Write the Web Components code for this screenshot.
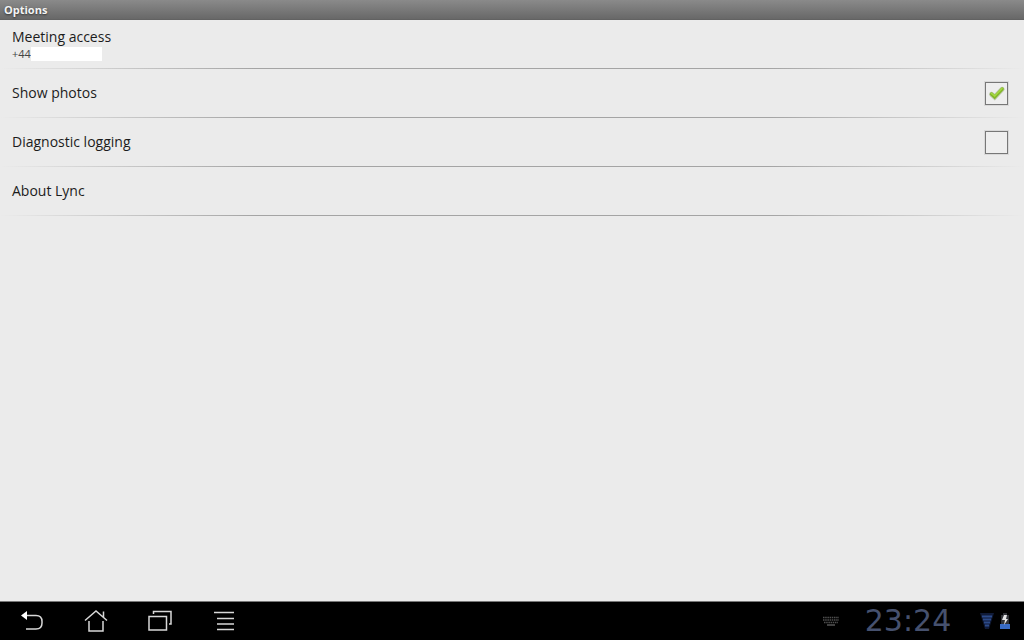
<!DOCTYPE html>
<html lang="en">
<head>
<meta charset="utf-8">
<title>Options</title>
<style>
html, body { height: 100%; margin: 0; }
body { font-family: "Open Sans", "Noto Sans", sans-serif; color: #1c1c1c; background: #ebebeb; }
</style>
</head>
<body>
<options-screen></options-screen>
<script>
function define(name, html, setup) {
  const template = document.createElement('template');
  template.innerHTML = html;
  customElements.define(name, class extends HTMLElement {
    constructor() {
      super();
      this.attachShadow({ mode: 'open' }).append(template.content.cloneNode(true));
    }
    connectedCallback() { if (setup) setup(this, this.shadowRoot); }
  });
}

define('title-bar', `
<style>
:host { display: flex; align-items: center; height: 20px; padding: 0 4px; box-sizing: border-box;
  background: linear-gradient(#8a8a8a, #686868); border-bottom: 1px solid #626262; }
h1 { margin: 0; font-size: 11px; line-height: 18px; font-weight: 700; color: #f4f4f4; text-shadow: 0 1px 2px #333; }
</style>
<h1><slot></slot></h1>`);

define('option-row', `
<style>
:host { display: flex; flex-direction: column; height: 49px; }
.body { flex: 1; display: flex; flex-direction: column; justify-content: center; padding: 0 12px; }
.title { font-size: 14px; line-height: 20px; }
.rule { height: 1px; background: linear-gradient(90deg, transparent, #a4a4a4 25%, #a4a4a4 75%, transparent); }
::slotted([slot=detail]) { font-size: 11px; line-height: 14px; color: #444; padding-bottom: 1px; }
</style>
<div class="body"><div class="title"><slot></slot></div><slot name="detail"></slot></div>
<div class="rule"></div>`);

define('check-row', `
<style>
:host { display: flex; flex-direction: column; height: 49px; }
label { flex: 1; display: flex; align-items: center; justify-content: space-between; padding: 0 16px 0 12px; font-size: 14px; line-height: 20px; }
.box { display: grid; width: 23px; height: 23px; }
input, svg { grid-area: 1 / 1; margin: 0; width: 23px; height: 23px; }
input { appearance: none; box-sizing: border-box; border: 1px solid #777; outline: 1px solid #d9d9d9; background: #eee; }
svg { pointer-events: none; visibility: hidden; z-index: 1; }
input:checked + svg { visibility: visible; }
.rule { height: 1px; background: linear-gradient(90deg, transparent, #a4a4a4 25%, #a4a4a4 75%, transparent); }
</style>
<label for="check"><span><slot></slot></span>
<span class="box"><input type="checkbox" id="check"><svg viewBox="0 0 23 23" fill="none" stroke-linecap="round" stroke-linejoin="miter">
<path d="M6.500 12.200 9.700 15.200 17.200 7.200" stroke="#b9c5a3" stroke-width="4.800"/>
<path d="M6.500 12 9.700 15 17.200 7" stroke="#83b827" stroke-width="3.200"/>
<path d="M6.500 11.400 9.700 14 17 6.400" stroke="#a5d843" stroke-width="1.500"/>
</svg></span></label>
<div class="rule"></div>`, (host, root) => {
  root.querySelector('input').checked = host.hasAttribute('checked');
});

define('masked-number', `
<style>
:host { display: flex; align-items: center; }
.mask { width: 71px; height: 14px; background: #fff; }
</style>
<slot></slot><span class="mask"></span>`);

define('nav-button', `
<style>
:host { display: block; width: 64px; height: 38px; }
button { display: grid; place-items: center; width: 100%; height: 100%; padding: 0; border: 0; background: none; color: #d8d8d8; }
</style>
<button type="button"><slot></slot></button>`, (host, root) => {
  root.querySelector('button').setAttribute('aria-label', host.getAttribute('label'));
});

define('system-clock', `
<style>
:host { display: block; width: 108px; text-align: center; font: 400 30px/36px "DejaVu Sans", sans-serif; color: #46516e; }
</style>
<time><slot></slot></time>`);

define('system-bar', `
<style>
:host { display: flex; justify-content: space-between; align-items: center; height: 39px; box-sizing: border-box; border-top: 1px solid #777; background: #000; }
nav, .status { display: flex; align-items: center; }
.status { padding-right: 13px; }
nav svg { display: block; width: 26px; height: 26px; fill: none; stroke: currentColor; stroke-width: 1.5; }
system-clock { margin: 0 18px 0 15px; }
.signal { margin-right: 5px; }
</style>
<nav>
<nav-button label="Back"><svg viewBox="0 0 26 26"><path d="M7 7.500h10q6 0 6 6v1.500q0 6-6 6H7"/><path d="M2 7.500 8 3v9z" fill="#fff" stroke="none"/></svg></nav-button>
<nav-button label="Home"><svg viewBox="0 0 26 26"><path d="M2 12.500 13 3 24 12.500M20.500 9V3.500M6 13v10h14V13"/></svg></nav-button>
<nav-button label="Recent apps"><svg viewBox="0 0 26 26"><path d="M2 8.500h17.500v13.500H2zM6.500 6V3.500h17.500V16h-2"/></svg></nav-button>
<nav-button label="Menu"><svg viewBox="0 0 26 26"><path stroke-width="1.500" d="M3 4.500h20M6 10.500h17M6 16h17M6 21.500h17"/></svg></nav-button>
</nav>
<div class="status">
<svg width="16" height="10" viewBox="0 0 16 10" fill="none" stroke="#505050" stroke-width="1.600"><path stroke-dasharray="1.500 .7" d="M0 1.500h16M0 4h16"/><path stroke-dasharray="1.500 .7" d="M1 6.500h14"/><path d="M4 9h8"/></svg>
<system-clock>23:24</system-clock>
<svg class="signal" width="14" height="18" viewBox="0 0 14 18"><path fill="#101b38" d="M0 1h14L9 17H5z"/><path stroke="#2c4b8a" stroke-width="2" d="M2 4.500h10M3 7.500h8M4 10.500h6M5 13.500h4"/></svg>
<svg width="12" height="18" viewBox="0 0 12 18"><path fill="#303238" d="M4 1h4v2h2v14H2V3h2z"/><path fill="#386bc5" d="M1 12h10v5H1z"/><path fill="#e5e5e5" d="M5 3h3L7 7h2l-4 6 1-5H3z"/></svg>
</div>`);

define('options-screen', `
<style>
:host { display: flex; flex-direction: column; min-height: 100vh; background: #ebebeb; }
main { flex: 1; }
</style>
<title-bar>Options</title-bar>
<main>
<option-row>Meeting access<masked-number slot="detail">+44</masked-number></option-row>
<check-row checked>Show photos</check-row>
<check-row>Diagnostic logging</check-row>
<option-row>About Lync</option-row>
</main>
<system-bar></system-bar>`);
</script>
</body>
</html>
